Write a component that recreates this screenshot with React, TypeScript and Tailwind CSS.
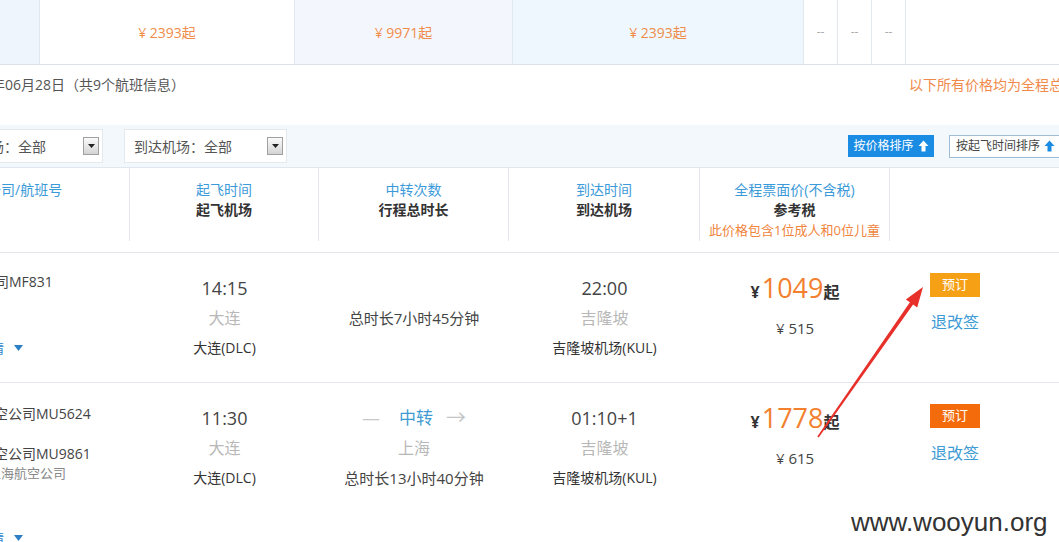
import React from "react";

const font = "font-['Open_Sans','Noto_Sans_CJK_SC',sans-serif]";

const UpArrow = ({ className }: { className: string }) => (
  <svg width="11" height="12" viewBox="0 0 11 12" className={className}>
    <path d="M5.5 0.5 L10.5 6 H7.5 V11.5 H3.5 V6 H0.5 Z" fill="currentColor" />
  </svg>
);

const DropBtn = () => (
  <span className="ml-auto mr-[3px] flex h-[18px] w-[16px] shrink-0 items-center justify-center border border-[#a0a0a0] bg-linear-to-b from-[#fbfbfb] to-[#d4d4d4]">
    <svg width="7" height="4" viewBox="0 0 7 4">
      <path d="M0 0 H7 L3.5 4 Z" fill="#222" />
    </svg>
  </span>
);

const Detail = () => (
  <div className="flex items-center text-[13px] leading-[20px] text-[#2b7fc6]">
    <span className="ml-[-22px] whitespace-nowrap">详情</span>
    <svg width="9" height="6" viewBox="0 0 9 6" className="ml-[10px]">
      <path d="M0 0 H9 L4.5 6 Z" fill="#2b7fc6" />
    </svg>
  </div>
);

const StripCell = ({ w, bg, price }: { w: string; bg: string; price: string }) => (
  <div className={`${w} ${bg} flex items-center justify-center border-r border-[#e3e8ee] text-[14px] text-[#f08c4a]`}>
    ¥ {price}起
  </div>
);

const Dash = () => (
  <div className="flex w-[34px] items-center justify-center border-r border-[#e3e8ee] text-[12px] text-[#aaa]">
    --
  </div>
);

const Place = ({ time, city, airport }: { time: React.ReactNode; city: string; airport: string }) => (
  <div className="flex flex-col items-center pt-[20px]">
    <div className="text-[18px] leading-[30px] text-[#444]">{time}</div>
    <div className="text-[16px] leading-[30px] text-[#b8b8b8]">{city}</div>
    <div className="text-[14px] leading-[30px] text-[#333]">{airport}</div>
  </div>
);

const Price = ({ price, tax }: { price: string; tax: string }) => (
  <div className="flex flex-col items-center pt-[18px]">
    <div className="flex items-baseline leading-[34px]">
      <span className="mr-[2px] text-[16px] font-bold text-[#333]">¥</span>
      <span className="text-[27px] text-[#f2802f]">{price}</span>
      <span className="text-[16px] font-bold text-[#333]">起</span>
    </div>
    <div className="mt-[7px] text-[15px] leading-[24px] text-[#444]">¥ {tax}</div>
  </div>
);

const Book = ({ color, pt }: { color: string; pt: string }) => (
  <div className={`flex w-[50px] flex-col items-center ${pt}`}>
    <button className={`h-[24px] w-[50px] ${color} text-[13px] text-white`}>预订</button>
    <div className="mt-[14px] text-[16px] leading-[22px] text-[#3d9bd4]">退改签</div>
  </div>
);

export default function App() {
  return (
    <div className={`relative h-[542px] w-[1059px] overflow-hidden bg-white text-[#333] ${font}`}>
      {/* date price strip */}
      <div className="flex h-[65px] border-b border-[#dde2e8]">
        <div className="w-[40px] border-r border-[#e3e8ee] bg-[#eef5fc]" />
        <StripCell w="w-[255px]" bg="bg-white" price="2393" />
        <StripCell w="w-[218px]" bg="bg-[#f4f6fd]" price="9971" />
        <StripCell w="w-[291px]" bg="bg-[#eef7fd]" price="2393" />
        <Dash />
        <Dash />
        <Dash />
        <div className="flex-1" />
      </div>

      {/* summary */}
      <div className="flex h-[60px] pt-[10px] text-[14px] leading-[20px]">
        <div className="flex-1 whitespace-nowrap text-[#555]">
          <span className="ml-[-41px]">2016年06月28日（共9个航班信息）</span>
        </div>
        <div className="w-[150px] shrink-0 overflow-hidden whitespace-nowrap text-[#f0894a]">
          以下所有价格均为全程总价
        </div>
      </div>

      {/* filters */}
      <div className="flex h-[43px] items-center border-b border-[#e1e7ee] bg-[#f3f8fc]">
        <div className="flex h-[34px] w-[103px] shrink-0 items-center overflow-hidden border border-l-0 border-[#e4e9ee] bg-white text-[14px] text-[#555]">
          <span className="ml-[-52px] whitespace-nowrap">起飞机场：全部</span>
          <DropBtn />
        </div>
        <div className="ml-[21px] flex h-[34px] w-[163px] shrink-0 items-center border border-[#e4e9ee] bg-white pl-[9px] text-[14px] text-[#555]">
          <span className="whitespace-nowrap">到达机场：全部</span>
          <DropBtn />
        </div>
        <button className="ml-[561px] flex h-[22px] w-[86px] shrink-0 items-center justify-center gap-[4px] bg-[#1b8ce3] text-[12px] text-white">
          按价格排序
          <UpArrow className="text-white" />
        </button>
        <button className="ml-[15px] flex h-[23px] w-[124px] shrink-0 items-center gap-[4px] border border-[#9fbdd6] bg-white pl-[6px] text-[12px] text-[#444]">
          按起飞时间排序
          <UpArrow className="text-[#1b8ce3]" />
        </button>
      </div>

      {/* table header */}
      <div className="flex h-[85px] border-b border-[#e3e7ec] text-[14px] leading-[20px]">
        <div className="h-[73px] w-[130px] shrink-0 border-r border-[#e3e7ec] pt-[12px] text-[#3b9ad9]">
          <div className="ml-[-41px] whitespace-nowrap">航空公司/航班号</div>
        </div>
        <div className="flex h-[73px] w-[189px] shrink-0 flex-col items-center border-r border-[#e3e7ec] pt-[12px]">
          <div className="text-[#3b9ad9]">起飞时间</div>
          <div className="font-bold text-[#333]">起飞机场</div>
        </div>
        <div className="flex h-[73px] w-[190px] shrink-0 flex-col items-center border-r border-[#e3e7ec] pt-[12px]">
          <div className="text-[#3b9ad9]">中转次数</div>
          <div className="font-bold text-[#333]">行程总时长</div>
        </div>
        <div className="flex h-[73px] w-[191px] shrink-0 flex-col items-center border-r border-[#e3e7ec] pt-[12px]">
          <div className="text-[#3b9ad9]">到达时间</div>
          <div className="font-bold text-[#333]">到达机场</div>
        </div>
        <div className="flex h-[73px] w-[190px] shrink-0 flex-col items-center border-r border-[#e3e7ec] pt-[12px]">
          <div className="text-[#3b9ad9]">全程票面价(不含税)</div>
          <div className="font-bold text-[#333]">参考税</div>
          <div className="text-[13px] leading-[21px] text-[#f0843c]">此价格包含1位成人和0位儿童</div>
        </div>
        <div className="flex-1" />
      </div>

      {/* flight 1 */}
      <div className="flex h-[130px] border-b border-[#e3e7ec]">
        <div className="w-[130px] shrink-0 pt-[19px]">
          <div className="ml-[-75px] whitespace-nowrap text-[14px] leading-[20px] text-[#444]">厦门航空公司MF831</div>
          <div className="mt-[46px]">
            <Detail />
          </div>
        </div>
        <div className="w-[189px] shrink-0">
          <Place time="14:15" city="大连" airport="大连(DLC)" />
        </div>
        <div className="flex w-[190px] shrink-0 flex-col items-center pt-[50px]">
          <div className="text-[15px] leading-[30px] text-[#444]">总时长7小时45分钟</div>
        </div>
        <div className="w-[191px] shrink-0">
          <Place time="22:00" city="吉隆坡" airport="吉隆坡机场(KUL)" />
        </div>
        <div className="w-[190px] shrink-0">
          <Price price="1049" tax="515" />
        </div>
        <div className="flex-1 pl-[40px]">
          <Book color="bg-[#f6a016]" pt="pt-[20px]" />
        </div>
      </div>

      {/* flight 2 */}
      <div className="flex h-[160px]">
        <div className="w-[130px] shrink-0 pt-[21px] text-[14px] leading-[20px] text-[#444]">
          <div className="ml-[-48px] whitespace-nowrap">东方航空公司MU5624</div>
          <div className="ml-[-48px] mt-[20px] whitespace-nowrap">东方航空公司MU9861</div>
          <div className="ml-[-12px] whitespace-nowrap text-[13px] leading-[18px] text-[#888]">上海航空公司</div>
          <div className="mt-[46px]">
            <Detail />
          </div>
        </div>
        <div className="w-[189px] shrink-0">
          <Place time="11:30" city="大连" airport="大连(DLC)" />
        </div>
        <div className="flex w-[190px] shrink-0 flex-col items-center pt-[20px]">
          <div className="flex h-[30px] items-center">
            <span className="text-[18px] text-[#c9c9c9]">—</span>
            <span className="ml-[19px] text-[17px] text-[#3f9bd2]">中转</span>
            <span className="ml-[13px] text-[20px] text-[#c4c4c4]">→</span>
          </div>
          <div className="text-[16px] leading-[30px] text-[#b8b8b8]">上海</div>
          <div className="text-[15px] leading-[30px] text-[#444]">总时长13小时40分钟</div>
        </div>
        <div className="w-[191px] shrink-0">
          <Place time="01:10+1" city="吉隆坡" airport="吉隆坡机场(KUL)" />
        </div>
        <div className="w-[190px] shrink-0">
          <Price price="1778" tax="615" />
        </div>
        <div className="flex-1 pl-[40px]">
          <Book color="bg-[#f46b0c]" pt="pt-[21px]" />
        </div>
      </div>

      {/* annotation arrow */}
      <svg className="pointer-events-none absolute left-0 top-0" width="1059" height="542" viewBox="0 0 1059 542">
        <polygon
          points="817.3,436.5 909.9,302.3 905.8,299.4 923,287 917.2,307.4 913.1,304.5 818.7,437.5"
          fill="#e8302a"
        />
      </svg>

      <div className="absolute left-[851px] top-[507px] font-['Liberation_Sans',sans-serif] text-[26px] leading-[30px] text-[#333] [text-shadow:0_0_3px_#fff]">
        www.wooyun.org
      </div>
    </div>
  );
}
